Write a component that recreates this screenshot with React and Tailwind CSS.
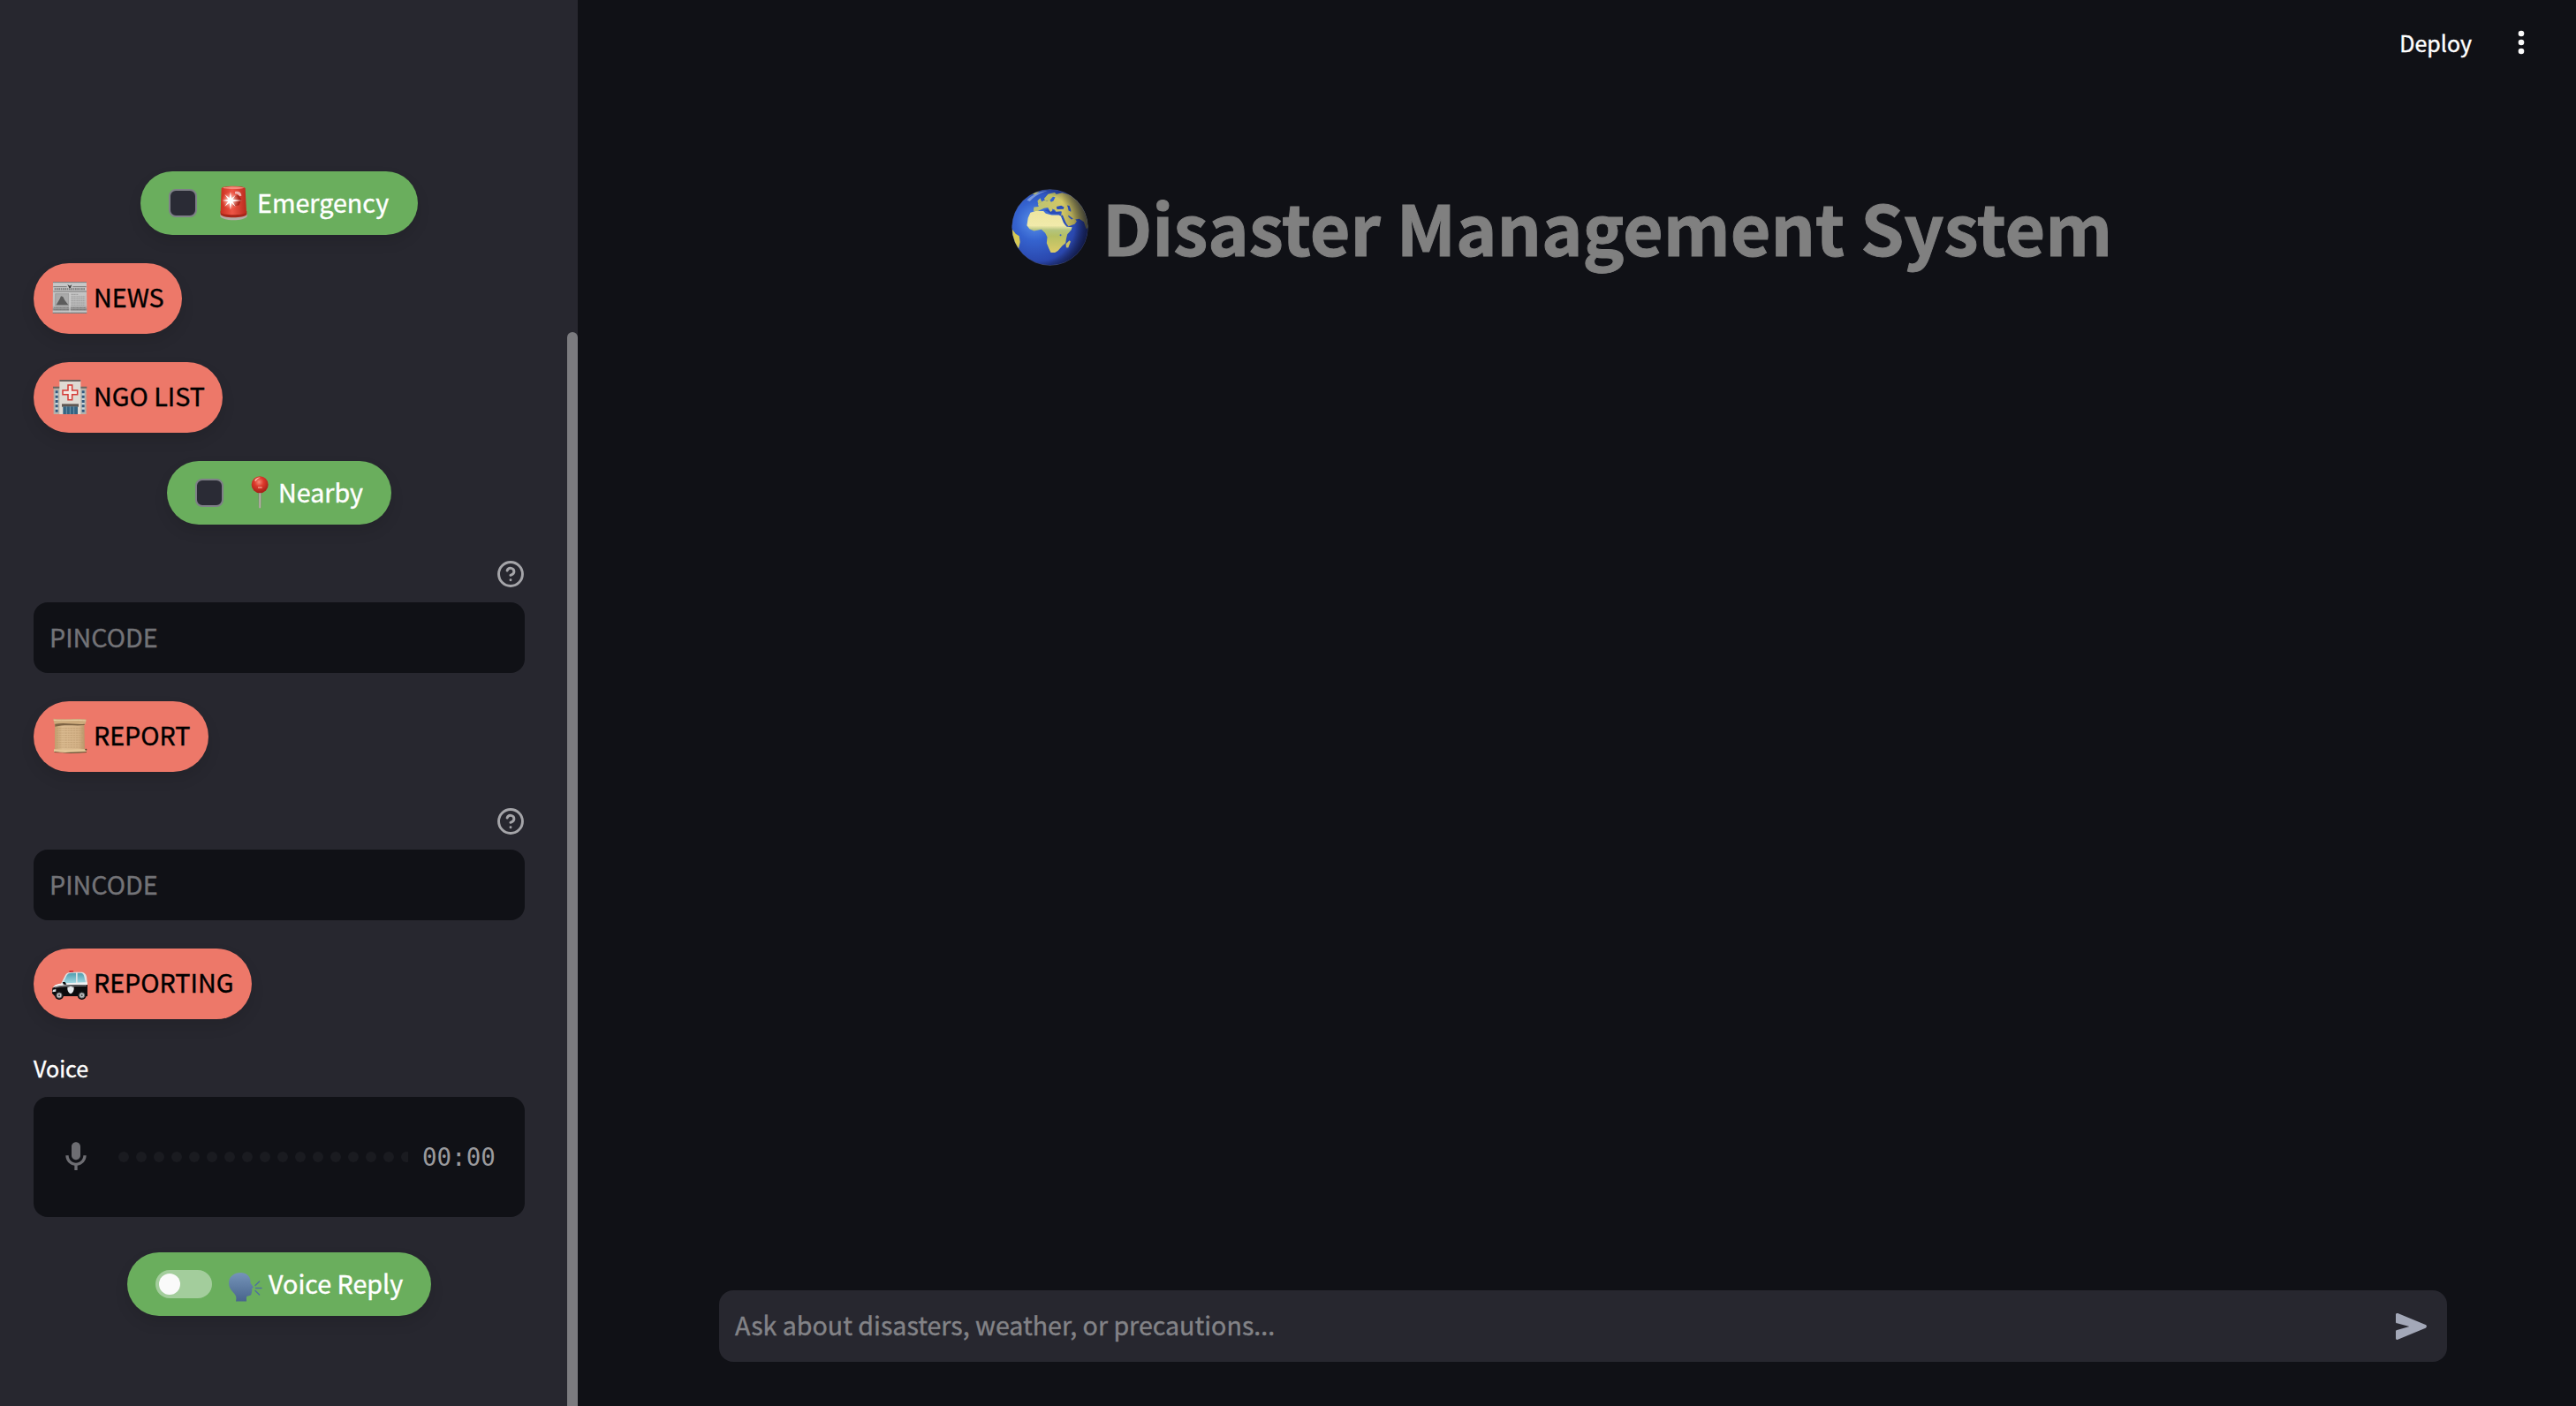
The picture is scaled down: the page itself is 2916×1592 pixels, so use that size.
function SirenIcon() {
  return (
    <svg viewBox="192 45 120 120" className="size-10 shrink-0">
      <defs>
        <linearGradient id="siren" x1="0" x2="1">
          <stop offset="0" stopColor="#c9301f" />
          <stop offset=".45" stopColor="#ee5546" />
          <stop offset="1" stopColor="#b92a1c" />
        </linearGradient>
        <radialGradient id="glow">
          <stop offset="0" stopColor="#fff" />
          <stop offset=".35" stopColor="#ffd5cc" stopOpacity=".8" />
          <stop offset="1" stopColor="#ff8c7a" stopOpacity="0" />
        </radialGradient>
      </defs>
      <path d="M208 140v10c8 17 82 17 91 0v-10z" fill="#b5aaa5" />
      <path d="M209 132h89v12c-10 13-80 13-89 0z" fill="#a82619" />
      <path d="M212 55c0-10 80-10 81 0l4 82c-10 10-80 10-88 0z" fill="url(#siren)" />
      <path d="M216 53c15-5 60-5 74 0-14 5-60 5-74 0z" fill="#f58c7d" />
      <path d="M258 66c14-4 22 4 22 14l-8 2c-2-7-7-9-14-8z" fill="#efb3b0" />
      <path d="M250 82l20-4 10 14-8 20-20 4z" fill="#a9261b" />
      <circle cx="243" cy="96" r="30" fill="url(#glow)" />
      <path d="M243 66l3 23 14-12-10 16 32 3-32 4 10 17-14-13-3 24-4-24-16 12 12-17-20-3 20-4-12-17 16 13z" fill="#fff" />
    </svg>
  );
}

function NewsIcon() {
  return (
    <svg viewBox="57 54 120 120" className="size-10 shrink-0">
      <defs>
        <linearGradient id="paper" x1="0" x2="0" y1="0" y2="1">
          <stop offset="0" stopColor="#c9c9c9" />
          <stop offset=".75" stopColor="#bdbdbd" />
          <stop offset=".88" stopColor="#8b8b8b" />
          <stop offset=".94" stopColor="#d0d0d0" />
          <stop offset="1" stopColor="#666" />
        </linearGradient>
      </defs>
      <path d="M60 58h114l1 107H59z" fill="url(#paper)" />
      <path d="M60 59h114" stroke="#7a7a7a" strokeWidth="3" />
      <path d="M61 74h46m20 0h46M61 90h113" stroke="#777" strokeWidth="3" />
      <path d="M109 66l8 5 7-4-4 11h-5z" fill="#3c3c3c" />
      <path d="M65 82h104" stroke="#777" strokeWidth="6" strokeDasharray="5 2" />
      <path d="M68 98h46v40H68z" fill="#aaa" stroke="#909090" strokeWidth="2" />
      <path d="M71 136l11-19 5-11 7 2 6 12 12 16z" fill="#5c5c5c" />
      <path d="M121 100h24m-24 8h48m-48 7h48m-48 7h48m-48 7h48m-48 7h48" stroke="#9a9a9a" strokeWidth="3" strokeDasharray="4 1" />
      <path d="M64 145h50m7 0h50M64 152h50m7 0h50" stroke="#777" strokeWidth="3" strokeDasharray="3 1" />
      <path d="M117 95v65" stroke="#d5d5d5" strokeWidth="3" />
    </svg>
  );
}

function HospitalIcon() {
  return (
    <svg viewBox="57 390 120 120" className="size-10 shrink-0">
      <path d="M62 415h111v92H62z" fill="#b5b0a8" />
      <path d="M60 413h24v6H60zM151 413h24v6h-24z" fill="#6a6460" />
      <path d="M82 391h72v116H82z" fill="#dedad3" />
      <path d="M82 390h72v6H82z" fill="#6a625e" />
      <path d="M68 426h9v76h-9zM158 426h9v76h-9z" fill="#c9d5dc" />
      <path d="M72.500 427v76M162.500 427v76" stroke="#34597c" strokeWidth="9" strokeDasharray="9 7" />
      <path d="M111 408h14v18h18v14h-18v18h-14v-18H93v-14h18z" fill="#f3e9e3" stroke="#d43a36" strokeWidth="4.500" />
      <path d="M90 472h57v10H90z" fill="#5f5853" />
      <path d="M94 481h50v26H94z" fill="#356482" />
      <path d="M106 481v26m12-26v26m13-26v26" stroke="#8fb0c0" strokeWidth="2" />
    </svg>
  );
}

function PinIcon() {
  return (
    <svg viewBox="282 1029 120 120" className="size-10 shrink-0">
      <defs>
        <radialGradient id="ball" cx=".45" cy=".35" r=".6">
          <stop offset="0" stopColor="#f58a78" />
          <stop offset=".45" stopColor="#dd3a2c" />
          <stop offset="1" stopColor="#a9231a" />
        </radialGradient>
        <linearGradient id="stem" x1="0" x2="1">
          <stop offset="0" stopColor="#6d7566" />
          <stop offset=".5" stopColor="#c3bdb2" />
          <stop offset="1" stopColor="#7b7568" />
        </linearGradient>
      </defs>
      <path d="M337 1085h11l-2 56h-7z" fill="url(#stem)" />
      <circle cx="342.500" cy="1061" r="28.500" fill="url(#ball)" />
      <path d="M324 1048c4-9 13-12 20-11-8 3-13 7-15 13z" fill="#f7b5a8" />
      <path d="M336 1068h14v6h-14z" fill="#f39a8a" opacity=".7" />
    </svg>
  );
}

function ScrollIcon() {
  return (
    <svg viewBox="57 102 120 120" className="size-10 shrink-0 overflow-visible">
      <defs>
        <linearGradient id="parchment" x1="0" x2="1">
          <stop offset="0" stopColor="#c09d6e" />
          <stop offset=".25" stopColor="#dbbb90" />
          <stop offset=".8" stopColor="#d5b388" />
          <stop offset="1" stopColor="#b99568" />
        </linearGradient>
      </defs>
      <path d="M66 112h100l2 98H66z" fill="url(#parchment)" />
      <path d="M61 101c30 5 85-2 112 3l-3 15c-30 5-78-4-105 2z" fill="#cdab7c" />
      <path d="M62 106c30 4 80-2 110 2" stroke="#ead0a5" strokeWidth="3" fill="none" />
      <path d="M67 119c35-6 68 3 100 0v4c-35 4-60-4-100 5z" fill="#7d6344" />
      <path d="M72 134h90m-90 8h88m-88 8h90m-90 8h86m-86 8h89m-89 8h87m-87 8h90m-90 8h86m-86 8h88" stroke="#b9976c" strokeWidth="2" strokeDasharray="6 2 9 2" />
      <path d="M63 205c35 4 78-2 110 0v10c-40 6-80 2-110-1z" fill="#e2c596" />
      <path d="M64 213c35 6 70 1 110 0v3c-40 4-80 3-109 0z" fill="#6c5136" />
      <circle cx="172" cy="206" r="3" fill="#4d3824" />
    </svg>
  );
}

function CarIcon() {
  return (
    <svg viewBox="57 942 120 120" className="size-10 shrink-0">
      <defs>
        <linearGradient id="glass" x1="0" x2="0" y1="0" y2="1">
          <stop offset="0" stopColor="#4f9dae" />
          <stop offset="1" stopColor="#a5dbe5" />
        </linearGradient>
      </defs>
      <rect x="115" y="957" width="15" height="7" rx="3" fill="#d2262b" />
      <path d="M86 1004l16-32c4-8 12-10 22-10h30c12 0 18 6 20 16l4 32z" fill="#dfe3e5" />
      <path d="M93 1001l14-28c3-6 9-8 16-8h15v34zM143 965h10c8 0 11 4 13 12l5 21h-28z" fill="url(#glass)" />
      <path d="M60 1016c3-11 17-15 42-16l75-3v13z" fill="#f2f2f3" />
      <path d="M58 1016c20-10 60-11 119-11v39H66l-9-10z" fill="#0c0c0e" />
      <path d="M66 1014c25-6 65-6 108-6" stroke="#77787b" strokeWidth="4" fill="none" />
      <path d="M60 1022l10-2v8l-12 2z" fill="#d9dde0" />
      <path d="M92 996h9l5 8h-10z" fill="#08080a" />
      <path d="M109 1013c8 0 8-3 11-3s4 3 11 3c1 12-3 19-11 23-8-4-12-11-11-23z" fill="#e6e9ec" />
      <circle cx="81" cy="1041" r="15" fill="#111214" />
      <circle cx="158" cy="1041" r="15" fill="#111214" />
      <circle cx="81" cy="1041" r="9" fill="#bfc0c2" stroke="#6c6d70" strokeWidth="3" />
      <circle cx="158" cy="1041" r="9" fill="#bfc0c2" stroke="#6c6d70" strokeWidth="3" />
      <circle cx="81" cy="1041" r="3" fill="#444" />
      <circle cx="158" cy="1041" r="3" fill="#444" />
    </svg>
  );
}

function SpeakingIcon() {
  return (
    <svg viewBox="258 1434 40 40" className="size-10 shrink-0">
      <defs>
        <linearGradient id="head" x1="0" x2="0" y1="0" y2="1">
          <stop offset="0" stopColor="#7594b9" />
          <stop offset="1" stopColor="#48648c" />
        </linearGradient>
      </defs>
      <path d="M267 1473.500c1-5 0-7-3-10-3.500-3.500-5-7-5-11 0-7 6-11.500 13.500-11.500 6.500 0 10.500 4 11 9 .1 1.300-.3 2 .2 2.800l2.800 4.200c.5.800.2 1.300-.7 1.600-.8.300-.8 1-.4 1.800.3.600-.2 1-.4 1.500.3 1-.2 1.400-.3 2.200 0 2-.9 3-3 3.100-2 .1-2.700.6-2.700 2.300v4z" fill="url(#head)" />
      <path d="M289 1455.500l4.600-4.500m-4.100 7.500h6.500m-7 3l4.600 4.500" stroke="#4f6f9f" strokeWidth="1.400" strokeLinecap="round" fill="none" />
    </svg>
  );
}

function GlobeIcon() {
  return (
    <svg viewBox="14 22 260 260" className="size-[87px] shrink-0">
      <defs>
        <radialGradient id="ocean" cx=".3" cy=".42" r=".72">
          <stop offset="0" stopColor="#5b93ea" />
          <stop offset=".35" stopColor="#3563cf" />
          <stop offset=".75" stopColor="#2a47ad" />
          <stop offset="1" stopColor="#1a2560" />
        </radialGradient>
        <linearGradient id="africa" x1="0" x2="0" y1="0" y2="1">
          <stop offset="0" stopColor="#ede6a0" />
          <stop offset=".35" stopColor="#f1eaaa" />
          <stop offset=".46" stopColor="#b3c47e" />
          <stop offset=".6" stopColor="#b5bf63" />
          <stop offset="1" stopColor="#dccb69" />
        </linearGradient>
        <linearGradient id="eurasia" x1="0" x2="1">
          <stop offset="0" stopColor="#b9c275" />
          <stop offset=".5" stopColor="#d3c865" />
          <stop offset="1" stopColor="#716a35" />
        </linearGradient>
        <radialGradient id="shade" cx=".38" cy=".5" r=".63">
          <stop offset=".7" stopColor="#0a1030" stopOpacity="0" />
          <stop offset="1" stopColor="#0a1030" stopOpacity=".6" />
        </radialGradient>
        <clipPath id="disc">
          <circle cx="144" cy="152" r="128" />
        </clipPath>
      </defs>
      <circle cx="144" cy="152" r="129" fill="#3b4566" />
      <circle cx="144" cy="152" r="128" fill="url(#ocean)" />
      <g clipPath="url(#disc)">
        <path d="M88 96l2-13 16-1-3-10 10-5 12-7 10 3 10-8 10-12 30-8 40 10 40 40 16 60-14 12-8-24-16-10-13 2 5 6-7 10-21 7-12-14-13-22 2-14-19 1-5-7-9-3 4 12-8 1-10-17-13 2-8 4-16 7z" fill="url(#eurasia)" />
        <path d="M124 55l14-16 22-5 10 10-18 4-9 15-15-2zM102 62l9-9 6 14-13 4zM84 40l12-8 12 0-14 9z" fill="#bdbf66" />
        <path d="M144 60l10-12 8 2-6 12-8 4z" fill="#3563cf" />
        <path d="M78 102l17-5h27l8 8 20 5h24l7 4 9 22 11 14 18 1-3 10-13 14-4 16-2 14-11 9-15 17-10 6h-14l-7-15-7-17 2-20-7-14-13-12-25 5-15-7-9-12 4-25z" fill="url(#africa)" />
        <path d="M124 94l12 4 10 8 28 0 8-8-18 2-10-6-8 6-8-9zM166 82l16-4 10 5-2 7-22 1zM202 77l8 2 5 14 0 6-8-4-2-10zM206 110l17 13-6 2-10-8zM182 111l5-1 14 33-4 3z" fill="#2a4eb8" />
        <path d="M199 220l-1-12 12-12 4 4-8 21z" fill="#c9c063" />
        <path d="M16 158l12 16 12 7 3 20-5 22-14-14-10-30z" fill="#d6c954" />
        <circle cx="180" cy="178" r="3" fill="#3563cf" />
        <circle cx="144" cy="152" r="128" fill="url(#shade)" />
      </g>
      <path d="M66 60c20-20 45-30 70-32-24 7-45 18-60 36z" fill="#cfe0f5" opacity=".45" />
    </svg>
  );
}

function HelpIcon() {
  return (
    <svg viewBox="0 0 24 24" fill="none" stroke="#a5a5a9" strokeWidth="2.200" strokeLinecap="round" strokeLinejoin="round" className="size-8">
      <circle cx="12" cy="12" r="10.100" />
      <path d="M9.090 9a3 3 0 0 1 5.830 1c0 2-3 3-3 3M12 17h.01" />
    </svg>
  );
}

function ActionButton({ icon, label, width }) {
  return (
    <button className={`flex h-20 items-center gap-[7px] rounded-full bg-[#ed7869] pl-[21px] text-[28.700px] leading-none text-black shadow-[0_8px_16px_rgba(0,0,0,0.1)] ${width}`}>
      {icon}
      <span className="pb-[3px] whitespace-nowrap">{label}</span>
    </button>
  );
}

function PillToggle({ control, icon, label, className }) {
  return (
    <label className={`flex h-[72px] items-center self-center rounded-full bg-[#6aae5d] pl-8 text-[28.700px] leading-none text-white shadow-[0_8px_16px_rgba(0,0,0,0.1)] ${className}`}>
      {control}
      {icon}
      <span className="pb-px whitespace-nowrap">{label}</span>
    </label>
  );
}

function Checkbox() {
  return <span className="mr-[21px] size-8 shrink-0 rounded-lg border-2 border-[#7e7f87] bg-[#2a2b35]" />;
}

function PincodeField() {
  return (
    <div className="flex flex-col gap-2">
      <div className="flex h-12 items-center justify-end">
        <HelpIcon />
      </div>
      <div className="flex h-20 items-center rounded-2xl bg-[#101116] pb-px pl-[18px] text-[28.700px] leading-none text-[#737377]">PINCODE</div>
    </div>
  );
}

const dots = Array.from({ length: 17 });

export default function App() {
  return (
    <div className="flex h-[1592px] w-[2916px] overflow-hidden bg-[#101116] font-['Noto_Sans_CJK_SC',sans-serif] text-white [-webkit-text-stroke:0.4px]">
      <aside className="flex w-[654px] shrink-0 justify-between bg-[#27272f] pl-[38px]">
        <div className="flex w-[556px] flex-col gap-8 pt-[194px]">
          <PillToggle className="w-[314px]" control={<Checkbox />} icon={<SirenIcon />} label={<span className="ml-[7px]">Emergency</span>} />
          <ActionButton icon={<NewsIcon />} label="NEWS" width="w-[168px]" />
          <ActionButton icon={<HospitalIcon />} label="NGO LIST" width="w-[214px]" />
          <PillToggle className="w-[254px]" control={<Checkbox />} icon={<PinIcon />} label={<span className="ml-px">Nearby</span>} />
          <PincodeField />
          <ActionButton icon={<ScrollIcon />} label="REPORT" width="w-[198px]" />
          <PincodeField />
          <ActionButton icon={<CarIcon />} label="REPORTING" width="w-[247px]" />
          <div className="flex flex-col gap-2">
            <div className="flex h-12 items-center pb-px text-[25.100px] leading-none">Voice</div>
            <div className="flex h-[136px] items-center rounded-2xl bg-[#101116] pl-7">
              <svg viewBox="0 0 24 24" className="size-10 shrink-0" fill="#6d6d72">
                <path d="M12 14c1.660 0 3-1.340 3-3V5c0-1.660-1.340-3-3-3S9 3.340 9 5v6c0 1.660 1.340 3 3 3zm5-3c0 2.760-2.240 5-5 5s-5-2.240-5-5H5c0 3.530 2.610 6.430 6 6.920V21h2v-3.080c3.390-.49 6-3.390 6-6.920h-2z" />
              </svg>
              <div className="ml-7 flex w-[328px] gap-2 overflow-hidden">
                {dots.map((_, i) => (
                  <span key={i} className="size-3 shrink-0 rounded-full bg-[#1a1b20]" />
                ))}
              </div>
              <span className="ml-4 pt-[2px] font-['DejaVu_Sans_Mono',monospace] text-[27.500px] leading-none text-[#9a9a9d] [-webkit-text-stroke:0px]">00:00</span>
            </div>
          </div>
          <PillToggle
            className="mt-2 w-[344px]"
            control={
              <span className="mr-[18px] flex h-8 w-16 shrink-0 items-center rounded-full bg-[#a3cd9c] pl-1">
                <span className="size-6 rounded-full bg-[#fafafa]" />
              </span>
            }
            icon={<SpeakingIcon />}
            label={<span className="ml-[6px]">Voice Reply</span>}
          />
        </div>
        <div className="mt-[376px] w-3 rounded-t-full bg-[#7b7b7f]" />
      </aside>

      <main className="flex flex-1 flex-col">
        <header className="flex h-24 items-center justify-end gap-[50px] pr-[56px] text-[25px] leading-none">
          <span>Deploy</span>
          <svg viewBox="0 0 12 32" className="h-8 w-3" fill="#fafafa">
            <circle cx="6" cy="6" r="3.300" />
            <circle cx="6" cy="16" r="3.300" />
            <circle cx="6" cy="26" r="3.300" />
          </svg>
        </header>
        <h1 className="mt-[116px] flex h-[90px] items-center gap-4 pl-[491px] text-[78.800px] leading-none font-bold text-[#808080] [-webkit-text-stroke:1px]">
          <GlobeIcon />
          <span className="pb-[2px] whitespace-nowrap">Disaster Management System</span>
        </h1>
        <div className="mt-auto mr-[146px] mb-[50px] ml-40 flex h-[81px] items-center justify-between rounded-2xl bg-[#27272f] pr-[23px] pl-[18px] text-[28.600px] leading-none text-[#838387]">
          <span className="pb-[2px]">Ask about disasters, weather, or precautions...</span>
          <svg viewBox="456 141 105 90" className="h-[30px] w-[35px]" fill="#a3a8b8">
            <path d="M456 146c0-4 3-6 7-5l94 39c5 2 5 9 0 11l-94 39c-4 2-7 0-7-4v-23c0-3 1-4 4-5l42-12-42-11c-3-1-4-2-4-5z" />
          </svg>
        </div>
      </main>
    </div>
  );
}
